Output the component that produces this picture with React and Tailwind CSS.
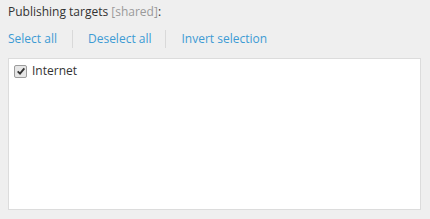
const App = () => {
	return (
		<div className="w-[430px] h-[219px] bg-[#efefef] px-2 pt-[3px] pb-[9px] flex flex-col text-[12px] text-[#333]" style={{ fontFamily: '"Open Sans", sans-serif' }}>
			<div className="leading-[18px]">
				Publishing targets <span className="text-[#9a9a9a]">[shared]</span>:
			</div>
			<div className="flex items-center mt-[9px] h-[18px] leading-[18px] text-[#3d9bd4]">
				<span className="pr-[15px]">Select all</span>
				<span className="w-px h-[18px] bg-[#d9d9d9]" />
				<span className="pl-[15px] pr-[13px]">Deselect all</span>
				<span className="w-px h-[18px] bg-[#d9d9d9]" />
				<span className="pl-[16px]">Invert selection</span>
			</div>
			<div className="mt-[10px] w-[413px] flex-1 bg-white border border-[#dcdcdc] pl-[5px] pt-[3px]">
				<label className="flex items-center gap-[5px] leading-[18px] text-[#333]">
					<span className="w-[13px] h-[13px] rounded-[2px] border border-[#9c9c9c] bg-[#e6e6e6] flex items-center justify-center">
						<svg viewBox="0 0 12 12" className="w-[10px] h-[10px]">
							<path d="M2 6.5 L4.8 9.2 L10 2.8" fill="none" stroke="#333" strokeWidth="2.2" />
						</svg>
					</span>
					<span>Internet</span>
				</label>
			</div>
		</div>
	);
};

export default App;
